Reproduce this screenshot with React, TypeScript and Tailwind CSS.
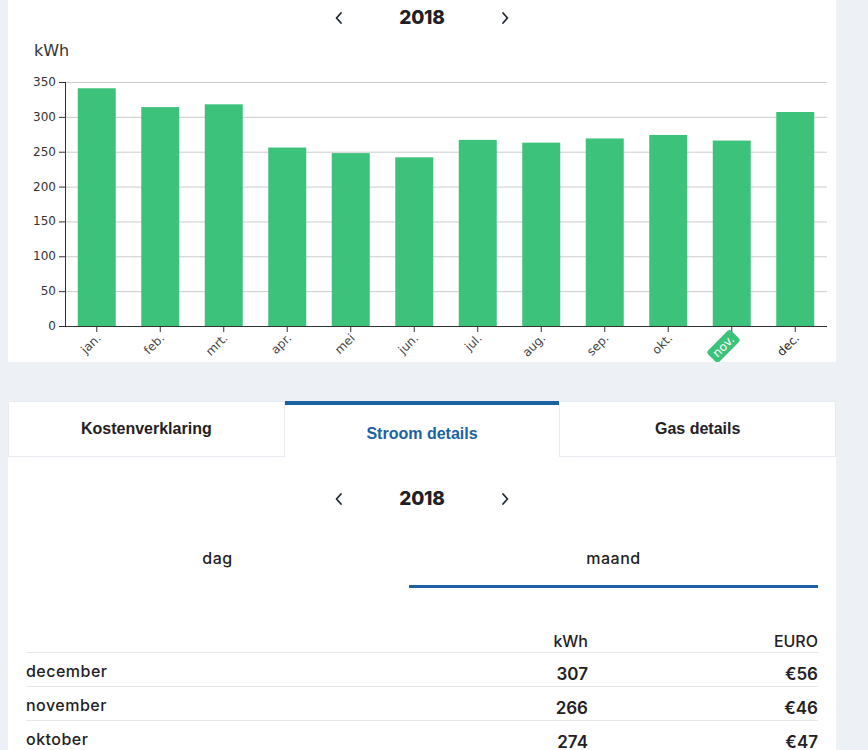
import * as React from "react";

const months = ["jan.", "feb.", "mrt.", "apr.", "mei", "jun.", "jul.", "aug.", "sep.", "okt.", "nov.", "dec."];
const values = [341, 314, 318, 256, 248, 242, 267, 263, 269, 274, 266, 307];

const rows = [
  { month: "december", kwh: 307, euro: 56 },
  { month: "november", kwh: 266, euro: 46 },
  { month: "oktober", kwh: 274, euro: 47 },
];

const X0 = 57;
const X1 = 819;
const Y0 = 290;
const Y350 = 46;
const band = (X1 - X0) / 12;
const yOf = (v: number) => Y0 - (v / 350) * (Y0 - Y350);

function Chevron({ dir }: { dir: "left" | "right" }) {
  return (
    <svg width="10" height="14" viewBox="0 0 10 14" fill="none">
      <polyline
        points={dir === "left" ? "7,2 2.5,7 7,12" : "3,2 7.5,7 3,12"}
        stroke="#1f2933"
        strokeWidth="1.8"
        strokeLinecap="round"
        strokeLinejoin="round"
      />
    </svg>
  );
}

function YearPicker() {
  return (
    <div className="flex items-center justify-center gap-[55px]">
      <Chevron dir="left" />
      <span className="font-['Inter',sans-serif] text-[19px] font-extrabold tracking-[-0.01em] text-[#1f2124]">2018</span>
      <Chevron dir="right" />
    </div>
  );
}

function Chart() {
  const ticks = [0, 50, 100, 150, 200, 250, 300, 350];
  return (
    <svg width="828" height="326" className="block" style={{ fontFamily: "'DejaVu Sans', sans-serif" }}>
      <text x="26" y="20" fontSize="16" fill="#333">kWh</text>
      {ticks.map((t) => (
        <g key={t}>
          {t > 0 && <line x1={X0} x2={X1} y1={yOf(t) + 0.5} y2={yOf(t) + 0.5} stroke="#cccccc" />}
          <line x1={X0 - 6} x2={X0} y1={yOf(t) + 0.5} y2={yOf(t) + 0.5} stroke="#333" />
          <text x={X0 - 9} y={yOf(t) + 4} fontSize="12" fill="#333" textAnchor="end">
            {t}
          </text>
        </g>
      ))}
      {values.map((v, i) => (
        <rect key={i} x={X0 + i * band + 12.75} y={yOf(v)} width="38" height={Y0 - yOf(v)} fill="#3dc27c" />
      ))}
      <line x1={X0 + 0.5} x2={X0 + 0.5} y1={Y350} y2={Y0} stroke="#333" />
      <line x1={X0} x2={X1} y1={Y0 + 0.5} y2={Y0 + 0.5} stroke="#333" />
      {months.map((m, i) => {
        const cx = X0 + i * band + band / 2;
        return (
          <g key={m}>
            <line x1={cx} x2={cx} y1={Y0} y2={Y0 + 6} stroke="#333" />
            <g transform={`translate(${cx + 2},${Y0 + 10}) rotate(-45)`}>
              {m === "nov." ? (
                <>
                  <rect x={-31} y={-8} width={33} height={16} rx={3} fill="#3dc27c" />
                  <text x={-2} y={4} fontSize="12" fill="#fff" textAnchor="end">
                    {m}
                  </text>
                </>
              ) : (
                <text x={0} y={4} fontSize="12" fill={m === "dec." ? "#222" : "#444"} textAnchor="end">
                  {m}
                </text>
              )}
            </g>
          </g>
        );
      })}
    </svg>
  );
}

export default function App() {
  const [tab, setTab] = React.useState("stroom");
  const [period, setPeriod] = React.useState("maand");

  const tabs = [
    { id: "kosten", label: "Kostenverklaring" },
    { id: "stroom", label: "Stroom details" },
    { id: "gas", label: "Gas details" },
  ];

  return (
    <div className="min-h-screen w-[868px] bg-[#edf0f5]">
      <div className="ml-2 w-[828px]">
        <section className="h-[362px] bg-white pt-[4px]">
          <YearPicker />
          <div className="mt-[3px]">
            <Chart />
          </div>
        </section>

        <section className="mt-[39px] bg-white pb-10">
          <div className="flex h-[56px]">
            {tabs.map((t) =>
              t.id === tab ? (
                <button
                  key={t.id}
                  onClick={() => setTab(t.id)}
                  className="flex flex-1 items-center justify-center border-t-4 border-[#1b62a3] pt-[6px] font-['Liberation_Sans',sans-serif] text-[16px] font-bold text-[#1b62a3]"
                >
                  {t.label}
                </button>
              ) : (
                <button
                  key={t.id}
                  onClick={() => setTab(t.id)}
                  className="flex flex-1 items-center justify-center border border-[#e8eaf1] font-['Liberation_Sans',sans-serif] text-[16px] font-bold text-[#1f2124]"
                >
                  <span className="-mt-[1px]">{t.label}</span>
                </button>
              )
            )}
          </div>

          <div className="px-[18px]">
            <div className="pt-[28px]">
              <YearPicker />
            </div>

            <div className="mt-[32px] grid grid-cols-[383px_409px]">
              {["dag", "maand"].map((p) => (
                <button
                  key={p}
                  onClick={() => setPeriod(p)}
                  className={`h-[42px] border-b-[3px] pb-[15px] font-['Inter',sans-serif] text-[16px] font-medium tracking-[0.03em] text-[#1f2124] ${
                    period === p ? "border-[#1b62a3]" : "border-transparent"
                  }`}
                >
                  {p}
                </button>
              ))}
            </div>

            <div className="mt-[41px] font-['Inter',sans-serif] text-[#1f2124]">
              <div className="grid h-[23px] grid-cols-[1fr_230px_230px] items-center text-[16px] font-medium">
                <span />
                <span className="text-right">kWh</span>
                <span className="text-right">EURO</span>
              </div>
              {rows.map((r) => (
                <div
                  key={r.month}
                  className="grid h-[34px] grid-cols-[1fr_230px_230px] items-center border-t border-[#e6e8ec]"
                >
                  <span className="pt-[3px] text-[16px] font-medium tracking-[0.03em]">{r.month}</span>
                  <span className="pt-[9px] text-right text-[17px] font-semibold">{r.kwh}</span>
                  <span className="pt-[9px] text-right text-[17px] font-semibold">€{r.euro}</span>
                </div>
              ))}
            </div>
          </div>
        </section>
      </div>
    </div>
  );
}
